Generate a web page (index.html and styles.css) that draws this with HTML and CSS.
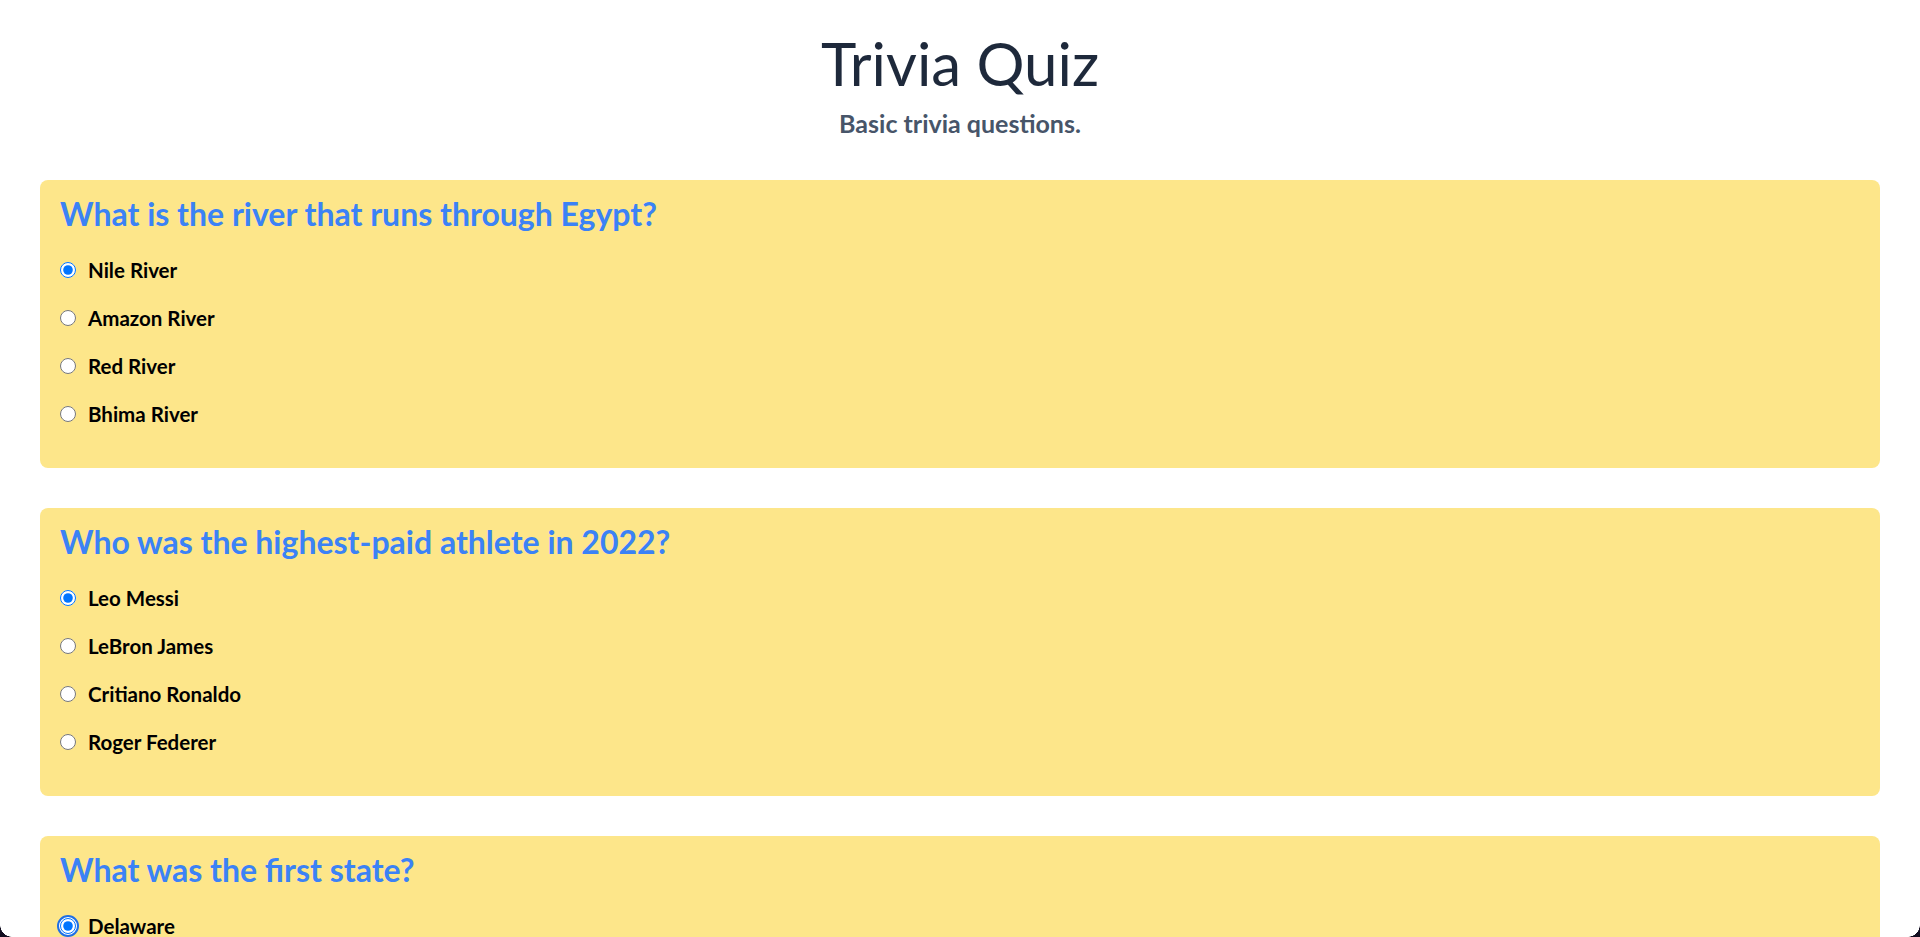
FILE: index.html
```html
<!DOCTYPE html>
<html lang="en">
<head>
<meta charset="utf-8">
<title>Trivia Quiz</title>
<link rel="stylesheet" href="styles.css">
</head>
<body>
<header class="page-header">
  <h1 class="title">Trivia Quiz</h1>
  <p class="subtitle">Basic trivia questions.</p>
</header>
<main class="quiz">
  <section class="card">
    <h2 class="question">What is the river that runs through Egypt?</h2>
    <div class="options">
      <label class="option"><input type="radio" name="q1" checked><span>Nile River</span></label>
      <label class="option"><input type="radio" name="q1"><span>Amazon River</span></label>
      <label class="option"><input type="radio" name="q1"><span>Red River</span></label>
      <label class="option"><input type="radio" name="q1"><span>Bhima River</span></label>
    </div>
  </section>
  <section class="card">
    <h2 class="question">Who was the highest-paid athlete in 2022?</h2>
    <div class="options">
      <label class="option"><input type="radio" name="q2" checked><span>Leo Messi</span></label>
      <label class="option"><input type="radio" name="q2"><span>LeBron James</span></label>
      <label class="option"><input type="radio" name="q2"><span>Critiano Ronaldo</span></label>
      <label class="option"><input type="radio" name="q2"><span>Roger Federer</span></label>
    </div>
  </section>
  <section class="card">
    <h2 class="question">What was the first state?</h2>
    <div class="options">
      <label class="option"><span class="focus-ring"><input type="radio" name="q3" checked></span><span>Delaware</span></label>
      <label class="option"><input type="radio" name="q3"><span>Pennsylvania</span></label>
      <label class="option"><input type="radio" name="q3"><span>New Jersey</span></label>
      <label class="option"><input type="radio" name="q3"><span>Georgia</span></label>
    </div>
  </section>
</main>
<div class="corner corner-left"></div>
<div class="corner corner-right"></div>
</body>
</html>
```
FILE: styles.css
```css
* { box-sizing: border-box; }

html, body {
  margin: 0;
  padding: 0;
  background: #ffffff;
}

body {
  font-family: "Lato", "Nunito", "Noto Sans", sans-serif;
  color: #000;
}

.page-header {
  text-align: center;
  padding-top: 33px;
}

.title {
  margin: 0;
  font-size: 60px;
  line-height: 60px;
  font-weight: 400;
  color: #1e293b;
}

.subtitle {
  margin: 16px 0 0;
  font-size: 25px;
  line-height: 28px;
  font-weight: 700;
  color: #475569;
}

.quiz {
  display: flex;
  flex-direction: column;
  gap: 40px;
  padding: 43px 40px 40px;
}

.card {
  background: #fde68a;
  border-radius: 8px;
  padding: 16px 20px 40px;
}

.question {
  margin: 0 0 24px;
  font-size: 32px;
  line-height: 36px;
  font-weight: 700;
  color: #3b82f6;
}

.options {
  display: flex;
  flex-direction: column;
  gap: 20px;
}

.option {
  display: flex;
  align-items: center;
  height: 28px;
  font-size: 20.5px;
  font-weight: 700;
  line-height: 28px;
}

.option input {
  margin: 0 12px 0 0;
  width: 16px;
  height: 16px;
  flex: none;
}

.focus-ring {
  display: inline-flex;
  flex: none;
  padding: 1px;
  margin: -3px 9px -3px -3px;
  border: 2px solid #1f6fe5;
  border-radius: 50%;
  background: #ffffff;
}

.focus-ring input {
  margin: 0;
}

.corner {
  position: fixed;
  bottom: 0;
  width: 12px;
  height: 12px;
  pointer-events: none;
}

.corner-left {
  left: 0;
  background: radial-gradient(circle at 12px 0, transparent 11.5px, #120d1f 12px);
}

.corner-right {
  right: 0;
  background: radial-gradient(circle at 0 0, transparent 11.5px, #120d1f 12px);
}
```
